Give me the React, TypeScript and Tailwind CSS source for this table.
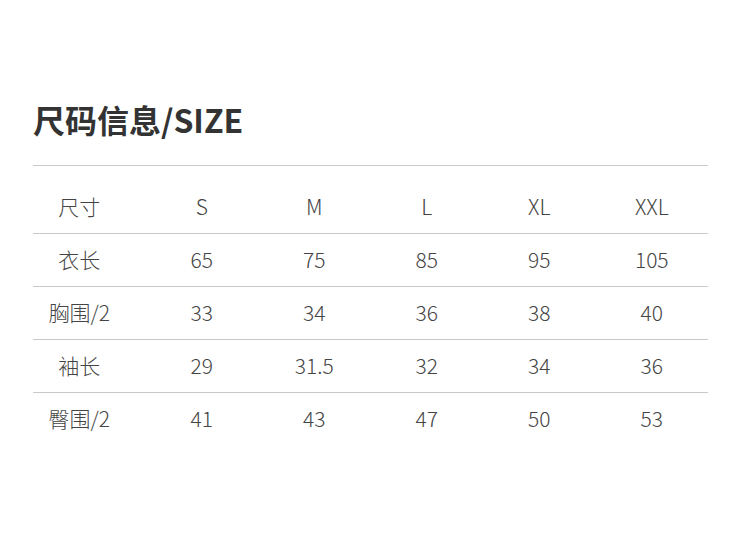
const headers = ['尺寸', 'S', 'M', 'L', 'XL', 'XXL'];

const rows: string[][] = [
  ['衣长', '65', '75', '85', '95', '105'],
  ['胸围/2', '33', '34', '36', '38', '40'],
  ['袖长', '29', '31.5', '32', '34', '36'],
  ['臀围/2', '41', '43', '47', '50', '53'],
];

function Row({ cells, header }: { cells: string[]; header?: boolean }) {
  return (
    <div
      className={`grid grid-cols-6 items-center ${
        header ? 'h-[67px] pt-[14px]' : 'h-[53px] border-t border-[#c9c9c9]'
      }`}
    >
      {cells.map((c, i) => (
        <div key={i} className={`text-center ${i === 0 ? 'pr-[20px]' : ''}`}>
          {c}
        </div>
      ))}
    </div>
  );
}

export default function App() {
  return (
    <div
      className="w-[750px] h-[543px] bg-white px-[33px] pt-[97px] text-[#444]"
      style={{ fontFamily: '"Noto Sans CJK SC", "Noto Sans", sans-serif' }}
    >
      <h1 className="text-[32px] font-bold leading-[44px] text-[#333]">尺码信息/SIZE</h1>
      <div className="mt-[24px] w-[675px] border-t border-[#c9c9c9] text-[21px] font-light">
        <Row cells={headers} header />
        {rows.map((r, i) => (
          <Row key={i} cells={r} />
        ))}
      </div>
    </div>
  );
}
